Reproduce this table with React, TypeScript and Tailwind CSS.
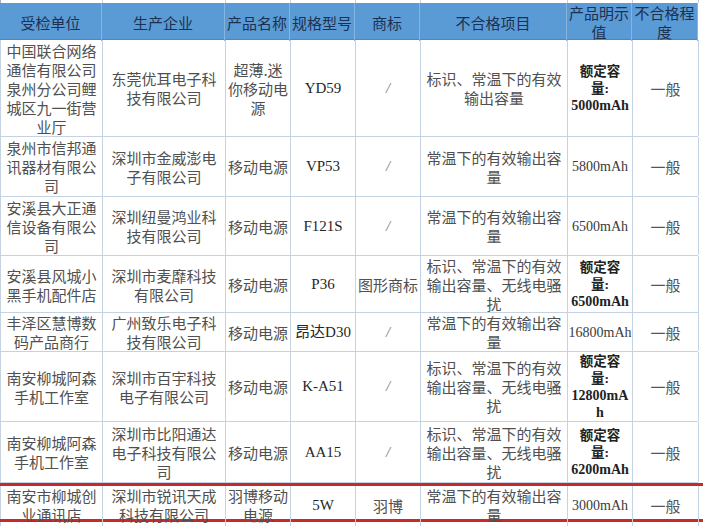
import React from "react";

type Kind = "cjk" | "latin" | "slash" | "mah" | "rated" | "level";
type Cell = { lines: string[]; kind: Kind };

const cjk = (...lines: string[]): Cell => ({ lines, kind: "cjk" });
const latin = (s: string): Cell => ({ lines: [s], kind: "latin" });
const slash: Cell = { lines: ["/"], kind: "slash" };
const mah = (s: string): Cell => ({ lines: [s], kind: "mah" });
const rated = (...lines: string[]): Cell => ({ lines, kind: "rated" });
const level: Cell = { lines: ["一般"], kind: "level" };

const ISSUE_A = cjk("标识、常温下的有效", "输出容量");
const ISSUE_B = cjk("常温下的有效输出容", "量");
const ISSUE_C = cjk("标识、常温下的有效", "输出容量、无线电骚", "扰");

const rows: { h: string; cells: Cell[] }[] = [
  {
    h: "h-[97px]",
    cells: [
      cjk("中国联合网络", "通信有限公司", "泉州分公司鲤", "城区九一街营", "业厅"),
      cjk("东莞优耳电子科", "技有限公司"),
      cjk("超薄.迷", "你移动电", "源"),
      latin("YD59"),
      slash,
      ISSUE_A,
      rated("额定容", "量:", "5000mAh"),
      level,
    ],
  },
  {
    h: "h-[60px]",
    cells: [
      cjk("泉州市信邦通", "讯器材有限公", "司"),
      cjk("深圳市金威澎电", "子有限公司"),
      cjk("移动电源"),
      latin("VP53"),
      slash,
      ISSUE_B,
      mah("5800mAh"),
      level,
    ],
  },
  {
    h: "h-[59px]",
    cells: [
      cjk("安溪县大正通", "信设备有限公", "司"),
      cjk("深圳纽曼鸿业科", "技有限公司"),
      cjk("移动电源"),
      latin("F121S"),
      slash,
      ISSUE_B,
      mah("6500mAh"),
      level,
    ],
  },
  {
    h: "h-[57px]",
    cells: [
      cjk("安溪县风城小", "黑手机配件店"),
      cjk("深圳市麦靡科技", "有限公司"),
      cjk("移动电源"),
      latin("P36"),
      cjk("图形商标"),
      ISSUE_C,
      rated("额定容", "量:", "6500mAh"),
      level,
    ],
  },
  {
    h: "h-[39px]",
    cells: [
      cjk("丰泽区慧博数", "码产品商行"),
      cjk("广州致乐电子科", "技有限公司"),
      cjk("移动电源"),
      latin("昂达D30"),
      slash,
      ISSUE_B,
      mah("16800mAh"),
      level,
    ],
  },
  {
    h: "h-[70px]",
    cells: [
      cjk("南安柳城阿森", "手机工作室"),
      cjk("深圳市百宇科技", "电子有限公司"),
      cjk("移动电源"),
      latin("K-A51"),
      slash,
      ISSUE_C,
      rated("额定容", "量:", "12800mA", "h"),
      level,
    ],
  },
  {
    h: "h-[61px]",
    cells: [
      cjk("南安柳城阿森", "手机工作室"),
      cjk("深圳市比阳通达", "电子科技有限公", "司"),
      cjk("移动电源"),
      latin("AA15"),
      slash,
      ISSUE_C,
      rated("额定容", "量:", "6200mAh"),
      level,
    ],
  },
];

const lastRow: Cell[] = [
  cjk("南安市柳城创", "业通讯店"),
  cjk("深圳市锐讯天成", "科技有限公司"),
  cjk("羽博移动", "电源"),
  latin("5W"),
  cjk("羽博"),
  ISSUE_B,
  mah("3000mAh"),
  level,
];

const GRID =
  "grid grid-cols-[102px_123px_65px_65px_65px_147px_65px_66px] w-[698px]";

function CellView({ cell }: { cell: Cell }) {
  if (cell.kind === "rated") {
    return (
      <div className="flex flex-col items-center justify-center h-full border-r border-[#c5d2e2] text-[#222222] [font-family:'Liberation_Serif','Noto_Sans_CJK_SC',serif]">
        {cell.lines.map((l, i) => (
          <span
            key={i}
            className={`whitespace-nowrap font-bold leading-[17px] ${
              /[0-9a-z]/i.test(l) ? "text-[14px]" : "text-[13.5px]"
            }`}
          >
            {l}
          </span>
        ))}
      </div>
    );
  }
  let cls = "";
  switch (cell.kind) {
    case "cjk":
      cls =
        "text-[15px] leading-[19px] text-[#505050] [font-family:'Noto_Sans_CJK_SC',sans-serif]";
      break;
    case "latin":
      cls =
        "text-[15px] leading-[19px] text-[#262626] [font-family:'Liberation_Serif','Noto_Sans_CJK_SC',serif]";
      break;
    case "slash":
      cls =
        "text-[15px] leading-[19px] text-[#7a7a7a] italic [font-family:'Liberation_Serif',serif]";
      break;
    case "mah":
      cls =
        "text-[14px] leading-[19px] text-[#3a3a3a] [font-family:'Liberation_Serif',serif]";
      break;
    case "level":
      cls =
        "text-[15px] leading-[19px] text-[#555555] [font-family:'Noto_Sans_CJK_SC',sans-serif]";
      break;
  }
  return (
    <div
      className={`flex flex-col items-center justify-center h-full border-r border-[#c5d2e2] text-center ${cls}`}
    >
      {cell.lines.map((l, i) => (
        <span key={i} className="whitespace-nowrap">
          {l}
        </span>
      ))}
    </div>
  );
}

const headers: string[][] = [
  ["受检单位"],
  ["生产企业"],
  ["产品名称"],
  ["规格型号"],
  ["商标"],
  ["不合格项目"],
  ["产品明示", "值"],
  ["不合格程", "度"],
];

export default function App() {
  return (
    <div className="w-[703px] h-[526px] bg-white overflow-hidden flex flex-col">
      {/* cut-off row above header */}
      <div className={`${GRID} h-[3px] border-l border-[#9fb0c2]`}>
        {headers.map((_, i) => (
          <div key={i} className="h-full border-r border-[#c5d2e2]" />
        ))}
      </div>
      {/* header */}
      <div
        className={`${GRID} h-[37px] bg-[#5b9bd5] border-b border-[#4a86c0]`}
      >
        {headers.map((h, i) => (
          <div
            key={i}
            className="flex flex-col items-center justify-center h-full border-r border-[#86b4e0] text-[15px] leading-[19px] text-[#1c3050] [font-family:'Noto_Sans_CJK_SC',sans-serif]"
          >
            {h.map((l, j) => (
              <span key={j} className="whitespace-nowrap">
                {l}
              </span>
            ))}
          </div>
        ))}
      </div>
      {rows.map((r, ri) => (
        <div
          key={ri}
          className={`${GRID} ${r.h} border-b border-l border-[#c5d2e2] box-border`}
        >
          {r.cells.map((c, ci) => (
            <CellView key={ci} cell={c} />
          ))}
        </div>
      ))}
      {/* highlighted last row */}
      <div className="w-[703px] h-[39px] border-y-[3px] border-[#c62a2a] box-border">
        <div className={`${GRID} h-full border-l border-[#c5d2e2]`}>
          {lastRow.map((c, ci) => (
            <CellView key={ci} cell={c} />
          ))}
        </div>
      </div>
      <div className={`${GRID} flex-1 border-l border-[#c5d2e2]`}>
        {headers.map((_, i) => (
          <div key={i} className="h-full border-r border-[#c5d2e2]" />
        ))}
      </div>
    </div>
  );
}
